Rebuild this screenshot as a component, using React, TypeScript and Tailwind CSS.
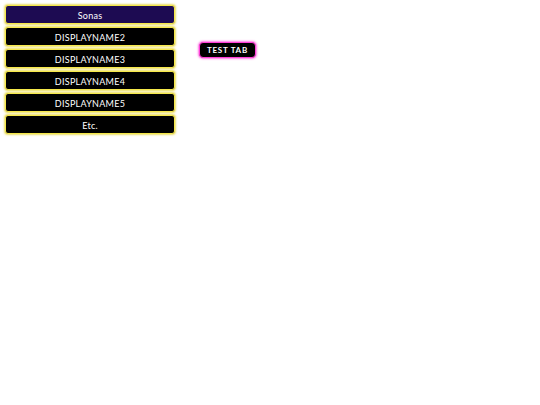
const tabs = ['Sonas', 'DISPLAYNAME2', 'DISPLAYNAME3', 'DISPLAYNAME4', 'DISPLAYNAME5', 'Etc.']

export default function App() {
  return (
    <div
      className="min-h-screen bg-white flex items-start pl-[5px] pt-[5px]"
      style={{ fontFamily: 'Lato, "DejaVu Sans", sans-serif' }}
    >
      <div className="w-[170px] flex flex-col gap-[3px]">
        {tabs.map((name, i) => (
          <button
            key={name}
            className={`h-[19px] w-full rounded-[3px] border border-[#f5e84a] shadow-[0_0_2px_1px_rgba(230,210,40,0.7)] text-white text-[9px] tracking-[0.03em] leading-none flex items-center justify-center pt-px ${
              i === 0 ? 'bg-[#1d0b52]' : 'bg-black'
            }`}
          >
            {name}
          </button>
        ))}
      </div>

      <button className="ml-[24px] mt-[37px] h-[16px] px-[7px] rounded-[4px] border border-[#ff3fd8] shadow-[0_0_2px_1px_rgba(255,60,220,0.7)] bg-black text-white text-[8px] font-bold tracking-[0.09em] leading-none flex items-center">
        TEST TAB
      </button>
    </div>
  )
}
